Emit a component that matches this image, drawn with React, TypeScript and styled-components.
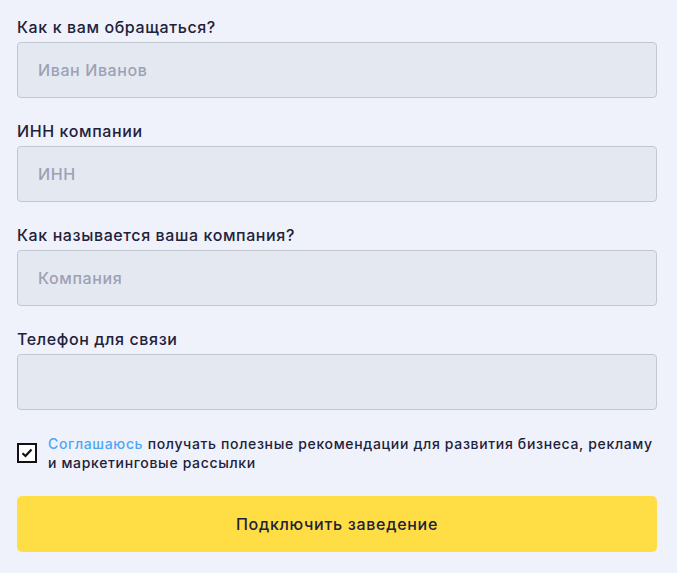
import React from "react";
import styled, { createGlobalStyle } from "styled-components";

const GlobalStyle = createGlobalStyle`
  html, body {
    margin: 0;
    padding: 0;
    background: #eff2fa;
  }
  body {
    font-family: "Inter", "Noto Sans", sans-serif;
    color: #22213a;
  }
`;

const Form = styled.form`
  display: flex;
  flex-direction: column;
  width: 640px;
  padding: 17px 0 0 17px;
`;

const Field = styled.label`
  display: flex;
  flex-direction: column;
  gap: 5px;
  margin-bottom: 23px;
`;

const FieldLabel = styled.span`
  font-size: 16px;
  line-height: 20px;
  font-weight: 500;
  letter-spacing: 0.6px;
  color: #22213a;
`;

const Input = styled.input`
  box-sizing: border-box;
  height: 56px;
  width: 100%;
  padding: 0 20px;
  border: 1px solid #c3c7d0;
  border-radius: 4px;
  background: #e4e8f1;
  font-family: inherit;
  font-size: 16px;
  font-weight: 500;
  letter-spacing: 0.6px;
  color: #22213a;
  outline: none;

  &::placeholder {
    color: #9da1b4;
  }
`;

const Consent = styled.div`
  display: flex;
  align-items: center;
  gap: 11px;
  margin-top: 1px;
`;

const Box = styled.span`
  box-sizing: border-box;
  flex: none;
  width: 20px;
  height: 20px;
  border: 2px solid #111;
  display: flex;
  align-items: center;
  justify-content: center;
  background: #fff;
`;

const ConsentText = styled.p`
  margin: 0;
  font-size: 14px;
  line-height: 19px;
  font-weight: 500;
  letter-spacing: 0.66px;
  color: #22213a;
`;

const Link = styled.a`
  color: #4ea6f7;
  text-decoration: none;
`;

const Submit = styled.button`
  margin-top: 24px;
  height: 56px;
  border: none;
  border-radius: 5px;
  background: #ffde45;
  font-family: inherit;
  font-size: 16px;
  font-weight: 500;
  letter-spacing: 0.7px;
  color: #22213a;
  cursor: pointer;
`;

const fields = [
  { label: "Как к вам обращаться?", placeholder: "Иван Иванов" },
  { label: "ИНН компании", placeholder: "ИНН" },
  { label: "Как называется ваша компания?", placeholder: "Компания" },
  { label: "Телефон для связи", placeholder: "" },
];

export default function App() {
  return (
    <>
      <GlobalStyle />
      <Form onSubmit={(e) => e.preventDefault()}>
        {fields.map((f) => (
          <Field key={f.label}>
            <FieldLabel>{f.label}</FieldLabel>
            <Input placeholder={f.placeholder} />
          </Field>
        ))}
        <Consent>
          <Box>
            <svg width="12" height="10" viewBox="0 0 12 10">
              <path d="M1.5 5.2 L4.5 8 L10.5 1.5" fill="none" stroke="#111" strokeWidth="2.2" />
            </svg>
          </Box>
          <ConsentText>
            <Link href="#">Соглашаюсь</Link> получать полезные рекомендации для развития бизнеса, рекламу
            <br />и маркетинговые рассылки
          </ConsentText>
        </Consent>
        <Submit type="submit">Подключить заведение</Submit>
      </Form>
    </>
  );
}
